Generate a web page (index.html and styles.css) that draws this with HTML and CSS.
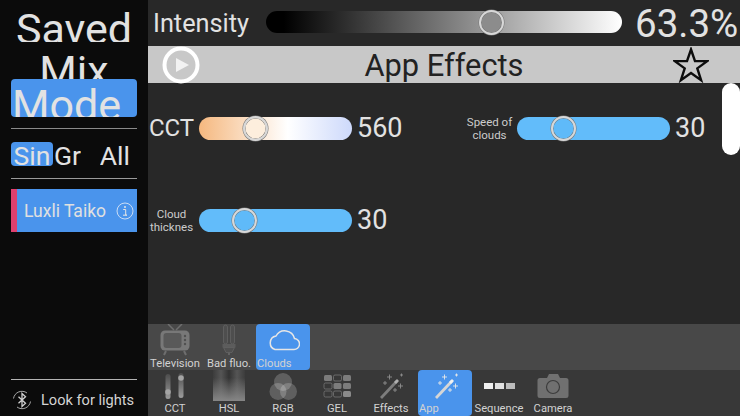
FILE: index.html
```html
<!DOCTYPE html>
<html lang="en">
<head>
  <meta charset="UTF-8" />
  <title>Luxli App Effects</title>
  <link rel="stylesheet" href="styles.css">
</head>
<body>
  <aside class="sidebar">
    <div class="big-title title-saved">Saved</div>
    <div class="big-title title-mix">Mix</div>
    <div class="big-title title-mode">Mode</div>
    <hr class="rule rule-first">
    <div class="filters">
      <span class="filter filter-active">Sin</span>
      <span class="filter">Gr</span>
      <span class="filter filter-all">All</span>
    </div>
    <hr class="rule rule-second">
    <div class="light">
      <span class="light-name">Luxli Taiko</span>
      <svg class="info" viewBox="0 0 18 18"><circle cx="9" cy="9" r="8" fill="none" stroke="#d8e4f5" stroke-width="0.9"/><circle cx="9" cy="5" r="1" fill="#e4e4e4"/><path d="M7.2 7.5h2.5v5.6h1.2M7 13.2h4" fill="none" stroke="#e4e4e4" stroke-width="1"/></svg>
    </div>
    <div class="sidebar-foot">
      <hr class="rule">
      <div class="look">
        <svg class="bt" viewBox="0 0 20 20" fill="none" stroke="#d0d0d0"><path d="M6.5 6.800l7 6.400-3.500 3.200V3.600l3.500 3.200-7 6.400" stroke-width="1.300"/><path d="M1.500 8.500A8.500 8.500 0 0 1 15 3M18.500 11.500A8.500 8.500 0 0 1 5 17" stroke-width="0.800"/></svg>
        <span>Look for lights</span>
      </div>
    </div>
  </aside>

  <main class="main">
    <div class="intensity">
      <span class="intensity-label">Intensity</span>
      <div class="track track-intensity"><span class="thumb thumb-grey"></span></div>
      <span class="intensity-value">63.3%</span>
    </div>

    <div class="effect-bar">
      <svg class="play" viewBox="0 0 38 38"><circle cx="19" cy="19" r="16.500" fill="none" stroke="#fff" stroke-width="4"/><path d="M14 12l13 7-13 7z" fill="#f2f2f2"/></svg>
      <h1 class="effect-title">App Effects</h1>
      <svg class="star" viewBox="0 0 36 36"><path d="M18 2.500l4 11.600h12.200l-9.900 7.300 3.800 11.800L18 26l-10.100 7.200 3.800-11.800-9.900-7.300H14z" fill="none" stroke="#0c0c0c" stroke-width="2.400"/></svg>
    </div>

    <div class="controls">
      <div class="control">
        <span class="control-label control-label-big">CCT</span>
        <div class="track track-cct"><span class="thumb thumb-cct"></span></div>
        <span class="control-value">560</span>
      </div>
      <div class="control">
        <span class="control-label">Speed of clouds</span>
        <div class="track track-blue"><span class="thumb thumb-speed"></span></div>
        <span class="control-value">30</span>
      </div>
      <div class="control">
        <span class="control-label">Cloud thicknes</span>
        <div class="track track-blue"><span class="thumb thumb-thick"></span></div>
        <span class="control-value">30</span>
      </div>
    </div>
    <div class="scroll-pill"></div>

    <div class="tabs">
      <div class="tab">
        <svg class="tab-icon" viewBox="0 0 32 32"><path d="M9 0l6 6M23 0l-6 6" stroke="#6e6e6e" stroke-width="1.500" fill="none"/><rect x="1.500" y="6.500" width="29" height="20" rx="4.500" fill="#787878"/><rect x="4.500" y="9" width="18" height="15" rx="3" fill="#595959"/><circle cx="26" cy="12" r="1.200" fill="#505050"/><circle cx="26" cy="16" r="1.200" fill="#505050"/><circle cx="26" cy="20" r="1.200" fill="#505050"/><path d="M7 27l-2 4M25 27l2 4" stroke="#6e6e6e" stroke-width="2"/></svg>
        <span>Television</span>
      </div>
      <div class="tab">
        <svg class="tab-icon" viewBox="0 0 32 32"><rect x="10.500" y="1" width="4" height="19" rx="2" fill="#4e4e4e" stroke="#636363" stroke-width="0.800"/><rect x="17.500" y="1" width="4" height="19" rx="2" fill="#4e4e4e" stroke="#636363" stroke-width="0.800"/><rect x="9.500" y="20" width="13" height="3.500" fill="#5c5c5c"/><path d="M10.500 23.500h11l-2.500 5h-6z" fill="#505050" stroke="#636363" stroke-width="0.800"/><rect x="15" y="28.500" width="2" height="2.500" fill="#636363"/></svg>
        <span>Bad fluo.</span>
      </div>
      <div class="tab tab-active">
        <svg class="tab-icon" viewBox="0 0 32 32"><path d="M7 25.500h18.500a5.500 5.500 0 0 0 1-11A10 10 0 0 0 8 12a7 7 0 0 0-1 13.500z" fill="none" stroke="#e6e6e6" stroke-width="1.500"/></svg>
        <span>Clouds</span>
      </div>
    </div>

    <nav class="nav">
      <div class="tab">
        <svg class="nav-icon" viewBox="0 0 32 28"><defs><linearGradient id="cctBar" x1="0" y1="0" x2="0" y2="1"><stop offset="0" stop-color="#4c4c4c"/><stop offset="1" stop-color="#9c9c9c"/></linearGradient></defs><rect x="6.500" y="1" width="5" height="25" rx="2.500" fill="url(#cctBar)"/><rect x="19.500" y="0" width="5" height="25" rx="2.500" fill="url(#cctBar)"/><circle cx="9" cy="19" r="2.800" fill="#a4a4a4"/><circle cx="22" cy="5" r="2.800" fill="#a4a4a4"/></svg>
        <span>CCT</span>
      </div>
      <div class="tab">
        <div class="hsl-icon"></div>
        <span>HSL</span>
      </div>
      <div class="tab">
        <svg class="nav-icon" viewBox="0 0 32 28"><g fill="#fff" fill-opacity="0.2"><circle cx="16" cy="9" r="9"/><circle cx="11" cy="18.500" r="8.500"/><circle cx="21.500" cy="18.500" r="8.500"/></g></svg>
        <span>RGB</span>
      </div>
      <div class="tab">
        <svg class="nav-icon" viewBox="0 0 32 28"><g fill="#7c7c7c"><rect x="3" y="2" width="8" height="6" rx="1.500"/><rect x="22" y="2" width="8" height="6" rx="1.500"/><rect x="12.500" y="10" width="8" height="6" rx="1.500"/><rect x="22" y="10" width="8" height="6" rx="1.500"/><rect x="22" y="18" width="8" height="6" rx="1.500" fill="#8a8a8a"/></g><g fill="none" stroke="#777" stroke-width="0.800"><rect x="12.500" y="2" width="8" height="6" rx="1.500"/><rect x="3" y="10" width="8" height="6" rx="1.500"/><rect x="3" y="18" width="8" height="6" rx="1.500"/><rect x="12.500" y="18" width="8" height="6" rx="1.500"/></g></svg>
        <span>GEL</span>
      </div>
      <div class="tab">
        <svg class="nav-icon" viewBox="0 0 32 28"><path d="M6 25L22 8" stroke="#7d7d7d" stroke-width="2.800"/><path d="M20 10l3-3" stroke="#b0b0b0" stroke-width="2.800"/><path d="M12 4h5M14.500 1.500v5M8 10h4M10 8v4M23 13h5M25.500 10.500v5M18 17h4M20 15v4M25 2h3M26.500 .5v3" stroke="#8e8e8e" stroke-width="0.900"/></svg>
        <span>Effects</span>
      </div>
      <div class="tab tab-active">
        <svg class="nav-icon" viewBox="0 0 32 28"><path d="M6 25L22 8" stroke="#d6d6d6" stroke-width="2.800"/><path d="M20 10l3-3" stroke="#f2f2f2" stroke-width="2.800"/><path d="M12 4h5M14.500 1.500v5M8 10h4M10 8v4M23 13h5M25.500 10.500v5M18 17h4M20 15v4M25 2h3M26.500 .5v3" stroke="#e8e8e8" stroke-width="0.900"/></svg>
        <span>App</span>
      </div>
      <div class="tab">
        <div class="seq-icon"><i class="seq-a"></i><i class="seq-b"></i><i class="seq-c"></i></div>
        <span>Sequence</span>
      </div>
      <div class="tab">
        <svg class="nav-icon" viewBox="0 0 32 28"><path d="M3 5h7l2-4h9l2 4h6a2.500 2.500 0 0 1 2.500 2.500v15A2.500 2.500 0 0 1 29 25H3a2.500 2.500 0 0 1-2.500-2.500v-15A2.500 2.500 0 0 1 3 5z" fill="#707070"/><circle cx="16" cy="14" r="6.500" fill="none" stroke="#3c3c3c" stroke-width="1.200"/></svg>
        <span>Camera</span>
      </div>
    </nav>
  </main>
</body>
</html>
```

FILE: styles.css
```css
* {
  margin: 0;
  padding: 0;
  box-sizing: border-box;
}

body {
  width: 740px;
  height: 416px;
  overflow: hidden;
  display: flex;
  background: #282828;
  color: #e2e2e2;
  font-family: Roboto, sans-serif;
}

/* left column */
.sidebar {
  width: 148px;
  height: 416px;
  flex: none;
  display: flex;
  flex-direction: column;
  padding: 0 11px;
  background: #0b0b0b;
}

.big-title {
  font-size: 43px;
  text-align: center;
  overflow: hidden;
  white-space: nowrap;
  color: #e2e2e2;
}

.title-saved {
  height: 42px;
  line-height: 58px;
}

.title-mix {
  height: 37px;
  line-height: 58px;
}

.title-mode {
  height: 38px;
  line-height: 53px;
  padding-left: 1px;
  text-align: left;
  border-radius: 4px;
  background: #4a94ec;
}

.rule {
  border: none;
  height: 1px;
  background: #8a8a8a;
}

.rule-first {
  margin-top: 11px;
}

.filters {
  display: flex;
  align-items: center;
  margin-top: 13px;
  font-size: 26.500px;
  height: 24px;
}

.filter {
  height: 24px;
  line-height: 28px;
  overflow: hidden;
}

.filter-active {
  width: 42px;
  margin-right: 1px;
  text-align: center;
  border-radius: 4px;
  background: #4a94ec;
}

.filter-all {
  margin-left: auto;
  margin-right: 7px;
}

.rule-second {
  margin-top: 12px;
  background: #9a9a9a;
}

.light {
  height: 43px;
  margin-top: 10px;
  display: flex;
  align-items: center;
  padding-left: 7px;
  padding-right: 3px;
  justify-content: space-between;
  background: #4a94ec;
  border-left: 6px solid #e0406e;
  font-size: 17.500px;
  color: #e0e0e0;
}

.info {
  width: 18px;
  height: 18px;
}

.sidebar-foot {
  margin-top: auto;
}

.sidebar-foot .rule {
  background: #b4b4b4;
}

.look {
  height: 36px;
  padding: 4px 0 0 1px;
  display: flex;
  align-items: center;
  gap: 9px;
  font-size: 14.600px;
  color: #d4d4d4;
}

.bt {
  width: 20px;
  height: 20px;
}

/* right side */
.main {
  position: relative;
  flex: 1;
  display: flex;
  flex-direction: column;
  height: 416px;
}

.intensity {
  height: 46px;
  display: flex;
  align-items: center;
  padding: 0 0 0 5px;
}

.intensity-label {
  width: 113px;
  margin-top: 2px;
  font-size: 25.300px;
  line-height: 46px;
}

.track {
  position: relative;
  flex: none;
  width: 153px;
  height: 23px;
  border-radius: 11.500px;
}

.track-intensity {
  width: 356px;
  height: 22px;
  margin-top: -2px;
  background: linear-gradient(90deg, #000 5%, #fff 100%);
}

.intensity-value {
  margin-left: 13px;
  font-size: 38.500px;
  white-space: nowrap;
}

.thumb {
  position: absolute;
  top: -1px;
  width: 25px;
  height: 25px;
  border-radius: 50%;
  border: 2px solid #d8d8d8;
  box-shadow: 0 0 0 0.500px #777, inset 0 0 0 0.500px #777;
}

.thumb-grey {
  left: 213px;
  background: #8c8c8c;
}

.thumb-cct {
  left: 44px;
  background: #fdeedd;
}

.thumb-speed {
  left: 34px;
  background: #5fbaf9;
}

.thumb-thick {
  left: 33px;
  background: #5fbaf9;
}

.effect-bar {
  height: 37px;
  display: grid;
  grid-template-columns: 1fr auto 1fr;
  align-items: center;
  padding: 0 31px 0 14px;
  background: #c8c8c8;
}

.play {
  width: 38px;
  height: 38px;
}

.effect-title {
  font-size: 30.800px;
  font-weight: 400;
  color: #222;
  padding-left: 17px;
}

.star {
  justify-self: end;
  width: 36px;
  height: 36px;
}

.controls {
  flex: 1;
  display: grid;
  grid-template-columns: 318px 274px;
  grid-auto-rows: 92px;
  padding-top: 34px;
}

.control {
  display: flex;
  align-items: flex-start;
  height: 23px;
}

.control-label {
  width: 47px;
  margin-right: 4px;
  flex: none;
  height: 23px;
  display: flex;
  align-items: center;
  justify-content: center;
  text-align: center;
  font-size: 11.500px;
  line-height: 13px;
  color: #cccccc;
}

.control-label-big {
  font-size: 24px;
  color: #e2e2e2;
}

.control-value {
  margin-left: 5px;
  font-size: 27px;
  line-height: 23px;
}

.track-cct {
  background: linear-gradient(90deg, #f5b87f 0%, #fff 58%, #cdd9fb 100%);
}

.track-blue {
  background: #62bcfa;
}

.scroll-pill {
  position: absolute;
  top: 83px;
  right: 0;
  width: 18px;
  height: 72px;
  border-radius: 9px;
  background: #fff;
}

.tabs,
.nav {
  height: 46px;
  flex: none;
  display: flex;
}

.tabs {
  background: #484848;
}

.nav {
  background: #383838;
}

.tab {
  width: 54px;
  height: 46px;
  flex: none;
  display: flex;
  flex-direction: column;
  align-items: center;
  overflow: hidden;
  white-space: nowrap;
  font-size: 11.200px;
  color: #d2d2d2;
}

.tab span {
  line-height: 14px;
  padding-top: 1px;
}

.tab-active {
  align-items: flex-start;
  border-radius: 4px;
  background: #4a94ec;
  padding-left: 1px;
}

.tab-icon {
  width: 32px;
  height: 32px;
  flex: none;
}

.tab-active .tab-icon,
.tab-active .nav-icon {
  align-self: center;
}

.nav-icon {
  width: 32px;
  height: 28px;
  margin-top: 3px;
  flex: none;
}

.hsl-icon {
  width: 32px;
  height: 31px;
  flex: none;
  background: linear-gradient(180deg, transparent 25%, #868686 100%), linear-gradient(90deg, #3c3c3c, #555 25%, #333 50%, #555 75%, #3c3c3c);
}

.seq-icon {
  height: 31px;
  flex: none;
  display: flex;
  align-items: center;
  gap: 2px;
}

.seq-icon i {
  width: 9px;
  height: 6px;
}

.seq-a {
  background: #f0f0f0;
}

.seq-b {
  background: #e0e0e0;
}

.seq-c {
  background: #bcbcbc;
}
```
